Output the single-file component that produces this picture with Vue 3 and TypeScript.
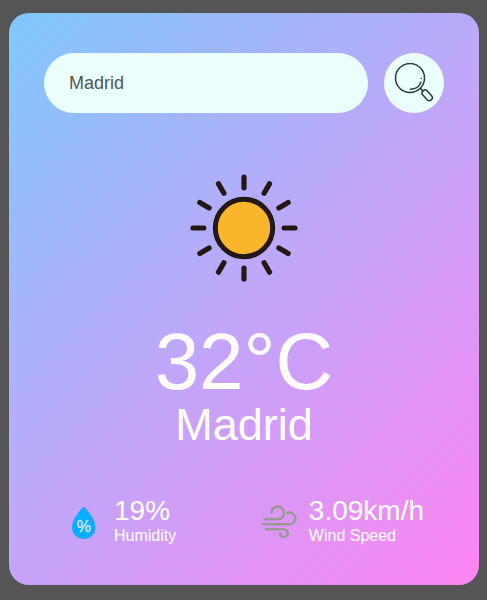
<script setup lang="ts">
import { ref } from 'vue'

interface Weather {
  city: string
  temp: number
  humidity: number
  wind: number
}

const query = ref('Madrid')
const weather = ref<Weather>({ city: 'Madrid', temp: 32, humidity: 19, wind: 3.09 })
const rays = Array.from({ length: 12 }, (_, i) => i * 30)

function search(): void {
  const name = query.value.trim()
  if (name) weather.value.city = name
}
</script>

<template>
  <main class="card">
    <form class="search" @submit.prevent="search">
      <input v-model="query" type="text" spellcheck="false" />
      <button type="submit">
        <svg class="search-icon" viewBox="0 0 40 40" fill="none" stroke="#2c3a3e" stroke-linecap="round">
          <circle cx="16" cy="15" r="14.5" stroke-width="1.5" />
          <path d="M16.4 26.2C21.4 26 25.7 23.4 26.9 19" stroke-width="1.4" />
          <path d="M27.4 15.4v.2" stroke-width="1.4" />
          <path d="M26.3 25.3l2.5 2.6" stroke-width="1.6" />
          <rect x="-6.1" y="-3" width="12.2" height="6" rx="2.9" transform="translate(33.2 32.3) rotate(48)" stroke-width="1.5" />
        </svg>
      </button>
    </form>

    <section class="weather">
      <svg class="sun" viewBox="0 0 170 170">
        <circle cx="85" cy="85" r="28.7" fill="#f9b52b" stroke="#231815" stroke-width="5" />
        <path
          v-for="angle in rays"
          :key="angle"
          d="M85 34v10.8"
          :transform="`rotate(${angle} 85 85)`"
          stroke="#231815"
          stroke-width="5.2"
          stroke-linecap="round"
        />
      </svg>
      <h1>{{ weather.temp }}°C</h1>
      <h2>{{ weather.city }}</h2>
      <div class="details">
        <div class="col">
          <svg class="icon" viewBox="0 0 40 40">
            <path d="M19.7 4.1C21 4.1 31.4 15.5 31.4 24.3C31.4 31 26.2 36 19.7 36S8 31 8 24.3C8 15.5 18.4 4.1 19.7 4.1Z" fill="#09adff" />
            <text class="percent" x="19.9" y="28.7" text-anchor="middle">%</text>
          </svg>
          <div>
            <p class="value">{{ weather.humidity }}%</p>
            <p>Humidity</p>
          </div>
        </div>
        <div class="col">
          <svg class="icon" viewBox="0 0 40 40" fill="none" stroke="#999" stroke-width="2.6" stroke-linecap="round">
            <path d="M5.8 16.1H18.5C22.4 16.1 25 13.4 25 9.8S22.2 3.5 18.7 3.5S12.4 6.2 12.4 9.9" />
            <path d="M3.7 21.2H30.8C34.2 21.2 36.2 18.6 36.2 15.4S33.9 9.5 30.7 9.5C29.7 9.5 29 9.7 28.3 10.1" />
            <path d="M7.3 26.3H24.8C27.2 26.3 28.8 28.1 28.8 30.2S27.1 34 24.9 34S21.1 32.4 21.1 30.4" />
          </svg>
          <div>
            <p class="value">{{ weather.wind }}km/h</p>
            <p>Wind Speed</p>
          </div>
        </div>
      </div>
    </section>
  </main>
</template>

<style>
body {
  background: #555;
}
</style>

<style scoped>
.card,
.card * {
  box-sizing: border-box;
  margin: 0;
  font-family: 'Liberation Sans', Arial, sans-serif;
}
.card {
  width: 470px;
  height: 572px;
  margin: 13px 0 0 9px;
  padding: 40px 35px;
  border-radius: 20px;
  background: linear-gradient(135deg, #80c8ff, #ff85f3);
  color: #fff;
  text-align: center;
}
.search {
  display: flex;
  gap: 16px;
}
.search input {
  flex: 1;
  min-width: 0;
  height: 60px;
  padding: 10px 25px;
  border: 0;
  outline: 0;
  border-radius: 30px;
  background: #ebfffc;
  color: #555;
  font-size: 18px;
}
.search button {
  width: 60px;
  height: 60px;
  padding: 0;
  border: 0;
  border-radius: 50%;
  background: #ebfffc;
  display: flex;
  align-items: center;
  justify-content: center;
}
.search-icon {
  width: 40px;
  height: 40px;
}
.weather .sun {
  display: block;
  width: 170px;
  height: 170px;
  margin: 30px auto 9px;
}
h1 {
  font-size: 80px;
  font-weight: 400;
  line-height: 80px;
}
h2 {
  font-size: 45px;
  font-weight: 400;
  line-height: 46px;
}
.weather .details {
  display: flex;
  justify-content: space-between;
  align-items: center;
  padding: 0 20px;
  margin-top: 53px;
}
.col {
  display: flex;
  align-items: center;
  gap: 10px;
  text-align: left;
}
.icon {
  width: 40px;
  height: 40px;
}
.icon .percent {
  font-size: 16px;
  fill: #e0e6e9;
  stroke: #e0e6e9;
  stroke-width: 0.3px;
}
.col p {
  font-size: 16px;
  line-height: 18px;
}
.col .value {
  margin-top: -6px;
  font-size: 28px;
  line-height: 32px;
}
</style>
